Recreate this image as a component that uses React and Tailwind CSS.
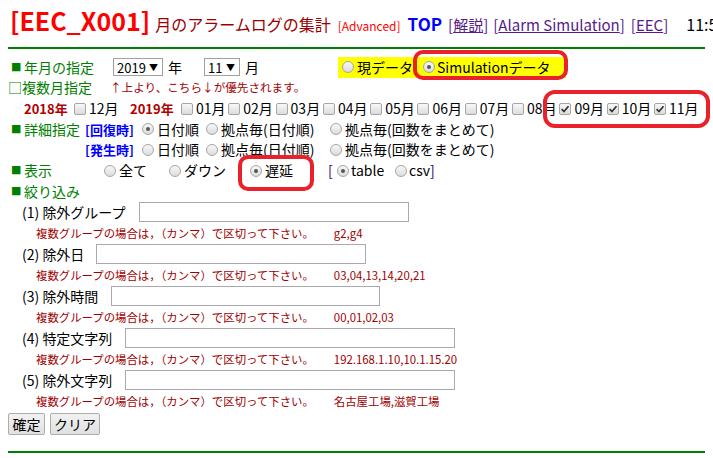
import React from 'react';

const Radio = ({ checked }) => (
  <span className="relative inline-block w-[12px] h-[12px] shrink-0 rounded-full border border-[#a6a6a6] bg-linear-to-b from-[#f8f8f8] to-[#dcdcdc]">
    {checked && <span className="absolute left-[3px] top-[3px] w-[4px] h-[4px] rounded-full bg-[#555555]" />}
  </span>
);

const Check = ({ checked }) => (
  <span className="inline-flex items-center justify-center w-[12px] h-[12px] shrink-0 rounded-[2px] border border-[#a6a6a6] bg-linear-to-b from-[#f8f8f8] to-[#dcdcdc]">
    {checked && (
      <svg width="10" height="10" viewBox="0 0 10 10">
        <path d="M1.6 5.2 L4 7.6 L8.5 2.3" fill="none" stroke="#333" strokeWidth="1.7" />
      </svg>
    )}
  </span>
);

const Select = ({ value, className }) => (
  <span className={`inline-flex items-center justify-between h-[18px] border border-[#a0a0a0] pl-[3px] pr-[4px] text-[13px] leading-none ${className}`}>
    {value}
    <span className="text-[9px]">▼</span>
  </span>
);

const Head = ({ children, className }) => (
  <span className={`flex items-center shrink-0 text-[#008000] ${className}`}>
    <span className="w-[16px] pl-[3px] text-[11px] font-['DejaVu_Sans',sans-serif]">■</span>
    {children}
  </span>
);

const Opt = ({ checked, label, className }) => (
  <span className={`flex items-center shrink-0 ${className}`}>
    <Radio checked={checked} />
    <span className="ml-[3px]">{label}</span>
  </span>
);

const months = ['01', '02', '03', '04', '05', '06', '07', '08', '09', '10', '11'];

const filters = [
  { no: '(1)', label: '除外グループ', lw: 'w-[117px]', iw: 'w-[270px]', hint: 'g2,g4' },
  { no: '(2)', label: '除外日', lw: 'w-[74px]', iw: 'w-[270px]', hint: '03,04,13,14,20,21' },
  { no: '(3)', label: '除外時間', lw: 'w-[89px]', iw: 'w-[269px]', hint: '00,01,02,03' },
  { no: '(4)', label: '特定文字列', lw: 'w-[103px]', iw: 'w-[330px]', hint: '192.168.1.10,10.1.15.20' },
  { no: '(5)', label: '除外文字列', lw: 'w-[103px]', iw: 'w-[330px]', hint: '名古屋工場,滋賀工場' },
];

const row = 'flex items-center h-[20.67px] whitespace-nowrap';

export default function App() {
  return (
    <div className="relative w-full h-screen overflow-hidden bg-white text-black text-[14px] font-['Noto_Sans_CJK_JP',sans-serif]">
      {/* header */}
      <div className="flex items-baseline whitespace-nowrap h-[47px] pl-[10px] pt-[8px]">
        <span className="text-[25px] font-bold text-[#ff0000] leading-none">[EEC_X001]</span>
        <span className="ml-[5px] text-[16px] text-[#990000]">月のアラームログの集計</span>
        <span className="ml-[7px] text-[12px] text-[#ff0000]">[Advanced]</span>
        <span className="ml-[7px] text-[17px] font-bold text-[#0000ff]">TOP</span>
        <span className="ml-[6px] text-[15px] text-[#551a8b]">[<span className="underline">解説</span>]</span>
        <span className="ml-[5px] text-[15px] text-[#551a8b]">[<span className="underline">Alarm Simulation</span>]</span>
        <span className="ml-[6px] text-[15px] text-[#551a8b]">[<span className="underline">EEC</span>]</span>
        <span className="ml-[18px] text-[16px]">11:58</span>
      </div>
      <div className="mx-[8px] border-t-2 border-[#008000]" />

      <div className="px-[8px] pt-[8px]">
        {/* 年月の指定 */}
        <div className={row}>
          <Head className="w-[105px]">年月の指定</Head>
          <Select value="2019" className="w-[50px]" />
          <span className="ml-[5px]">年</span>
          <Select value="11" className="ml-[22px] w-[36px]" />
          <span className="ml-[5px]">月</span>
          <div className="ml-[79px] flex items-center h-full w-[228px] pl-[4px] bg-[#ffff00]">
            <Radio />
            <span className="ml-[3px] w-[66px]">現データ</span>
            <Radio checked />
            <span className="ml-[2px]">Simulationデータ</span>
          </div>
        </div>

        {/* 複数月指定 */}
        <div className={row}>
          <span className="w-[102px] shrink-0 text-[#008000]">□複数月指定</span>
          <span className="text-[11.6px] text-[#a00000]">↑上より、こちら↓が優先されます。</span>
        </div>

        <div className={`${row} pl-[16px]`}>
          <span className="w-[50px] shrink-0 text-[13px] font-bold text-[#b00000]">2018年</span>
          <span className="flex items-center w-[56px] shrink-0">
            <Check />
            <span className="ml-[3px]">12月</span>
          </span>
          <span className="w-[51px] shrink-0 text-[13px] font-bold text-[#b00000]">2019年</span>
          {months.map((m) => (
            <span key={m} className="flex items-center w-[47.3px] shrink-0">
              <Check checked={m === '09' || m === '10' || m === '11'} />
              <span className="ml-[3px]">{m}月</span>
            </span>
          ))}
        </div>

        {/* 詳細指定 */}
        <div className={row}>
          <Head className="w-[77px]">詳細指定</Head>
          <span className="w-[57px] shrink-0 text-[13px] font-bold text-[#0000ff]">[回復時]</span>
          <Opt checked label="日付順" className="w-[64px]" />
          <Opt label="拠点毎(日付順)" className="w-[124px]" />
          <Opt label="拠点毎(回数をまとめて)" />
        </div>
        <div className={row}>
          <span className="w-[77px] shrink-0" />
          <span className="w-[57px] shrink-0 text-[13px] font-bold text-[#0000ff]">[発生時]</span>
          <Opt label="日付順" className="w-[64px]" />
          <Opt label="拠点毎(日付順)" className="w-[124px]" />
          <Opt label="拠点毎(回数をまとめて)" />
        </div>

        {/* 表示 */}
        <div className={row}>
          <Head className="w-[96px]">表示</Head>
          <Opt label="全て" className="w-[65px]" />
          <Opt label="ダウン" className="w-[81px]" />
          <Opt checked label="遅延" className="w-[78px]" />
          <span className="w-[9px] shrink-0 text-[#330066]">[</span>
          <Radio checked />
          <span className="ml-[2px] w-[44px]">table</span>
          <Radio />
          <span className="ml-[2px]">csv<span className="text-[#330066]">]</span></span>
        </div>

        <div className={row}>
          <Head>絞り込み</Head>
        </div>

        {filters.map((f) => (
          <div key={f.no}>
            <div className="flex items-center h-[21px] pl-[14px] whitespace-nowrap">
              <span className={`shrink-0 ${f.lw}`}>{f.no} {f.label}</span>
              <span className={`h-[20px] border border-[#a9a9a9] bg-white ${f.iw}`} />
            </div>
            <div className="flex items-center h-[21px] pl-[28px] whitespace-nowrap text-[11.4px] text-[#a00000]">
              <span>複数グループの場合は，（カンマ）で区切って下さい。</span>
              <span className="ml-[20px]">{f.hint}</span>
            </div>
          </div>
        ))}

        <div className="flex gap-[5px] mt-[1px]">
          <button className="h-[22px] w-[37px] rounded-[2px] border border-[#adadad] bg-linear-to-b from-[#f2f2f2] to-[#e0e0e0] text-[14px] leading-none">確定</button>
          <button className="h-[22px] w-[50px] rounded-[2px] border border-[#adadad] bg-linear-to-b from-[#f2f2f2] to-[#e0e0e0] text-[14px] leading-none">クリア</button>
        </div>

        <div className="mt-[16px] border-t-2 border-[#008000]" />
      </div>

      {/* annotation marks */}
      <div className="absolute left-[413px] top-[50px] w-[155px] h-[30px] rounded-[10px] border-4 border-[#e8212b]" />
      <div className="absolute left-[543px] top-[90px] w-[167px] h-[38px] rounded-[12px] border-4 border-[#e8212b]" />
      <div className="absolute left-[238px] top-[155px] w-[76px] h-[36px] rounded-[10px] border-4 border-[#e8212b]" />
    </div>
  );
}
